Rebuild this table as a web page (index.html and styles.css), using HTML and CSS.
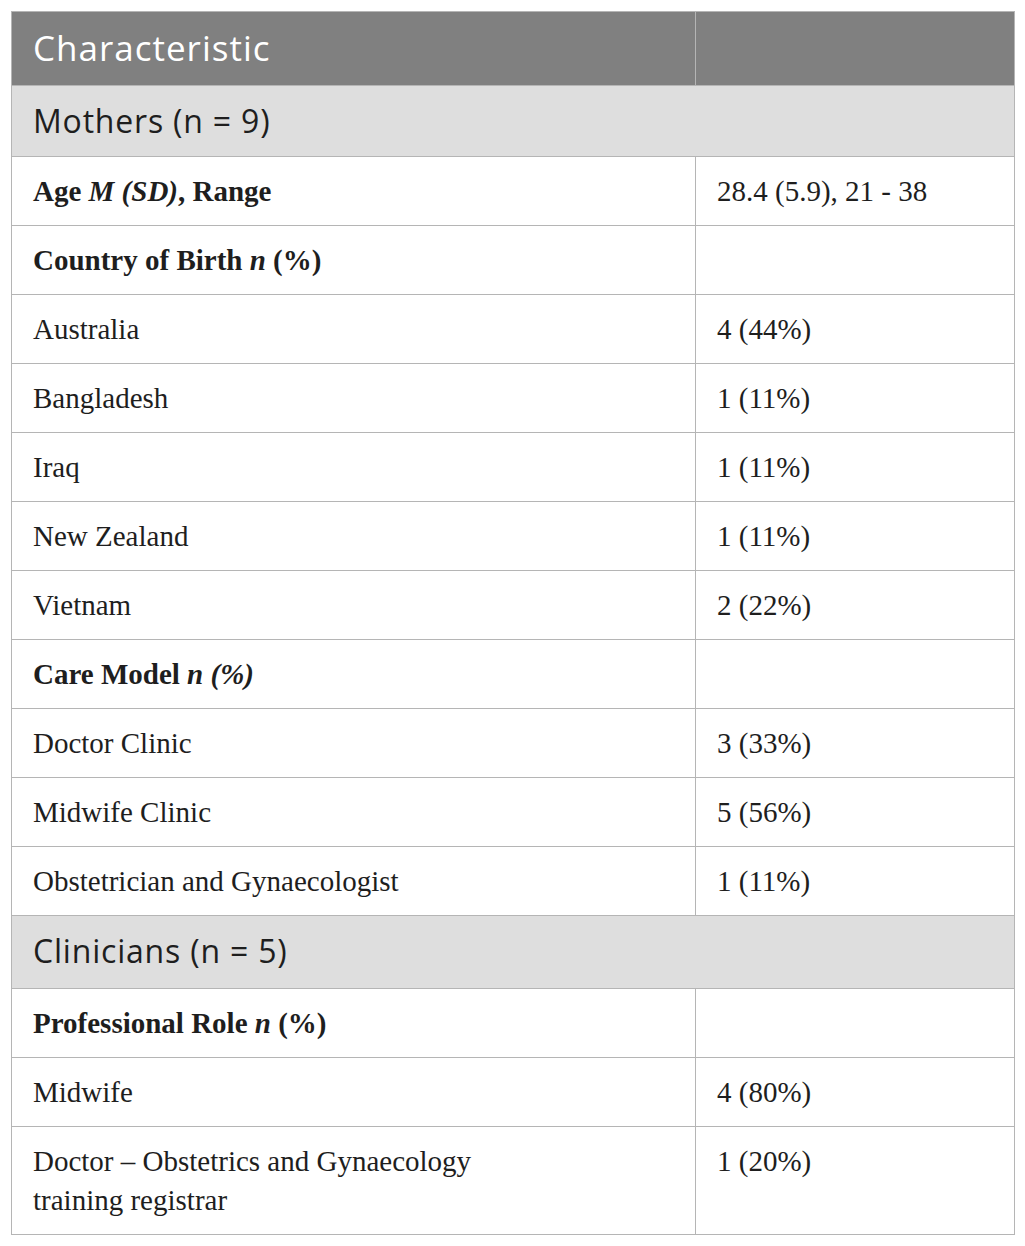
FILE: index.html
```html
<!DOCTYPE html>
<html>
<head>
<meta charset="utf-8">
<link rel="stylesheet" href="styles.css">
</head>
<body>
<div class="wrap">
<table class="tbl">
  <colgroup><col class="c1"><col class="c2"></colgroup>
  <thead>
    <tr class="head"><th>Characteristic</th><th></th></tr>
  </thead>
  <tbody>
    <tr class="section"><td>Mothers (n = 9)</td><td></td></tr>
    <tr><td><b>Age <i>M (SD)</i>, Range</b></td><td>28.4 (5.9), 21 - 38</td></tr>
    <tr><td><b>Country of Birth <i>n</i> (%)</b></td><td></td></tr>
    <tr><td>Australia</td><td>4 (44%)</td></tr>
    <tr><td>Bangladesh</td><td>1 (11%)</td></tr>
    <tr><td>Iraq</td><td>1 (11%)</td></tr>
    <tr><td>New Zealand</td><td>1 (11%)</td></tr>
    <tr><td>Vietnam</td><td>2 (22%)</td></tr>
    <tr><td><b>Care Model <i>n (%)</i></b></td><td></td></tr>
    <tr><td>Doctor Clinic</td><td>3 (33%)</td></tr>
    <tr><td>Midwife Clinic</td><td>5 (56%)</td></tr>
    <tr><td>Obstetrician and Gynaecologist</td><td>1 (11%)</td></tr>
    <tr class="section section-tall"><td>Clinicians (n = 5)</td><td></td></tr>
    <tr><td><b>Professional Role <i>n</i> (%)</b></td><td></td></tr>
    <tr><td>Midwife</td><td>4 (80%)</td></tr>
    <tr><td>Doctor – Obstetrics and Gynaecology<br>training registrar</td><td>1 (20%)</td></tr>
  </tbody>
</table>
</div>
</body>
</html>
```

FILE: styles.css
```css
html, body {
  margin: 0;
  padding: 0;
  background: #ffffff;
}
.wrap {
  padding: 11px 11px 0 11px;
}
.tbl {
  width: 1003px;
  border-collapse: collapse;
  table-layout: fixed;
  font-family: "Liberation Serif", "Times New Roman", serif;
  font-size: 29px;
  color: #1e1e1e;
}
.c1 { width: 684px; }
.c2 { width: 319px; }
.tbl th, .tbl td {
  border: 1px solid #b5b5b5;
  text-align: left;
  vertical-align: top;
  padding: 15px 20px 14px 21px;
  line-height: 39px;
}
.tbl .head th {
  background: #808080;
  color: #ffffff;
  font-family: "Open Sans", Lato, sans-serif;
  font-weight: normal;
  font-size: 35px;
  letter-spacing: 1px;
  line-height: 44px;
  padding-top: 14px;
  padding-bottom: 15px;
}
.tbl .section td {
  background: #dedede;
  font-family: "Open Sans", Lato, sans-serif;
  font-size: 32px;
  letter-spacing: 0.8px;
  line-height: 42px;
  padding-top: 14px;
  padding-bottom: 14px;
  border-left-color: #dedede;
  border-right-color: #dedede;
}
.tbl .section-tall td {
  padding-bottom: 16px;
}
.tbl .section td:first-child { border-left-color: #b5b5b5; }
.tbl .section td:last-child { border-right-color: #b5b5b5; }
.tbl b { font-weight: bold; }
```
